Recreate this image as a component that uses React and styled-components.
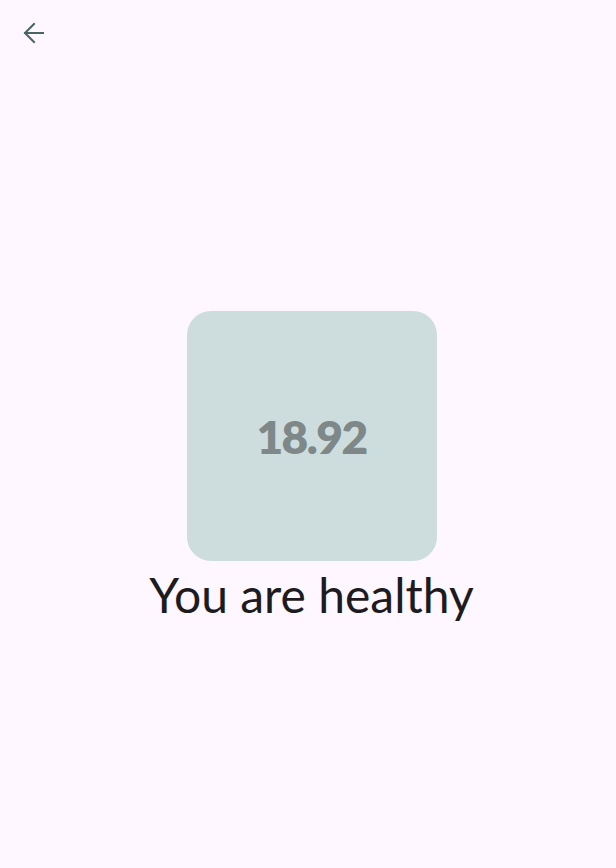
import React from 'react'
import styled, { createGlobalStyle } from 'styled-components'

const Global = createGlobalStyle`
  html, body {
    margin: 0;
    padding: 0;
    background: #fef7ff;
  }
  body {
    font-family: Lato, 'Open Sans', sans-serif;
  }
`

const App = () => (
  <>
    <Global />
    <Page>
      <TopBar>
        <BackButton aria-label='back'>
          <svg width='24' height='24' viewBox='0 0 24 24' fill='none' stroke='#4a6464' strokeWidth='2' strokeLinecap='square'>
            <path d='M3 12h18' />
            <path d='M12 3l-9 9 9 9' />
          </svg>
        </BackButton>
      </TopBar>
      <Content>
        <ScoreCard>18.92</ScoreCard>
        <Verdict>You are healthy</Verdict>
      </Content>
    </Page>
  </>
)

const Page = styled.div`
  display: flex;
  flex-direction: column;
  min-height: 868px;
`

const TopBar = styled.div`
  display: flex;
  align-items: center;
  height: 64px;
  padding-left: 10px;
`

const BackButton = styled.button`
  display: flex;
  align-items: center;
  justify-content: center;
  width: 48px;
  height: 48px;
  margin-top: 2px;
  padding: 0;
  border: none;
  background: none;
  cursor: pointer;
`

const Content = styled.div`
  flex: 1;
  display: flex;
  flex-direction: column;
  align-items: center;
  justify-content: center;
  padding: 6px 0 0 7px;
`

const ScoreCard = styled.div`
  display: flex;
  align-items: center;
  justify-content: center;
  width: 250px;
  height: 250px;
  border-radius: 24px;
  background: #cdddde;
  color: #7e8889;
  font-size: 46px;
  font-weight: 800;
  letter-spacing: -1.5px;
`

const Verdict = styled.div`
  color: #1d1b20;
  font-size: 48px;
  line-height: 64px;
  margin-top: 2px;
`

export default App
